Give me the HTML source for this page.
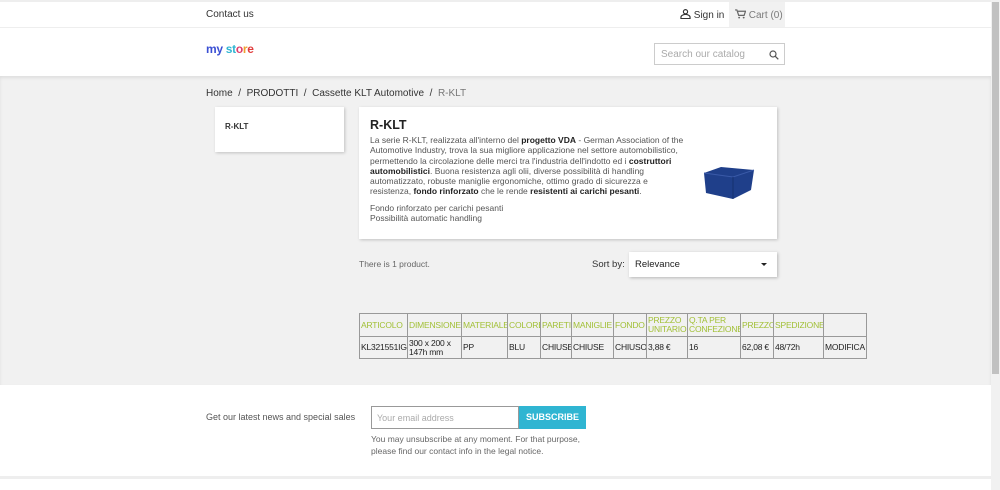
<!DOCTYPE html>
<html><head><meta charset="utf-8"><style>
*{box-sizing:border-box;margin:0;padding:0}
body{width:1000px;height:490px;overflow:hidden;background:#fff;font-family:"Liberation Sans",sans-serif;color:#333;position:relative}
.abs{position:absolute}
.sb{position:absolute;right:0;top:0;width:9px;height:490px;background:#f1f1f1}
.sb div{position:absolute;left:1px;top:2px;width:7px;height:372px;background:#c1c1c1}
table{table-layout:fixed}
td{border:1px solid #999;font-size:8.5px;padding:0 1px;vertical-align:middle;white-space:nowrap;line-height:9px;overflow:hidden;letter-spacing:-0.2px}
tr.h td{color:#a2c037;height:23px}
tr.d td{color:#222;height:22px}
</style></head><body>
<div class="abs" style="left:0;top:0;width:991px;height:2px;background:#eee"></div>
<div class="abs" style="left:206px;top:9px;font-size:10px;color:#333">Contact us</div>
<div class="abs" style="left:680px;top:9px;font-size:10px;color:#333">
<svg width="11" height="10" viewBox="0 0 12 11" style="vertical-align:-1px"><circle cx="6" cy="3" r="2.3" fill="none" stroke="#333" stroke-width="1.3"/><path d="M1 10.5v-1.5c0-2 3-3 5-3s5 1 5 3v1.5z" fill="none" stroke="#333" stroke-width="1.3"/></svg> Sign in</div>
<div class="abs" style="left:729px;top:2px;width:56px;height:25px;background:#f1f1f1;font-size:10px;color:#7a7a7a;padding:7px 0 0 6px">
<svg width="11" height="10" viewBox="0 0 12 11" style="vertical-align:-1px"><path d="M0 1h2l2 6h6l1.5-4.5H3" fill="none" stroke="#666" stroke-width="1.3"/><circle cx="4.5" cy="9.5" r="1" fill="#666"/><circle cx="9.5" cy="9.5" r="1" fill="#666"/></svg> Cart (0)</div>
<div class="abs" style="left:0;top:27px;width:991px;height:1px;background:#eee"></div>
<div class="abs" style="left:206px;top:42px;font-size:12px;font-weight:bold;letter-spacing:-0.3px"><span style="color:#3a4fd3">my </span><span style="color:#2fb5d2">st</span><span style="color:#e03c6a">o</span><span style="color:#f0a030">r</span><span style="color:#e03c3c">e</span></div>
<div class="abs" style="left:654px;top:43px;width:131px;height:22px;border:1px solid #ccc;font-size:10px;color:#aaa;padding:5px 0 0 6px">Search our catalog
<svg class="abs" style="left:114px;top:6px" width="10" height="10" viewBox="0 0 10 10"><circle cx="4" cy="4" r="3" fill="none" stroke="#555" stroke-width="1.2"/><path d="M6.3 6.3L9.3 9.3" stroke="#555" stroke-width="1.3"/></svg></div>
<div class="abs" style="left:0;top:76px;width:991px;height:309px;background:#f1f1f1;box-shadow:inset 0 2px 3px rgba(0,0,0,.08)"></div>
<div class="abs" style="left:206px;top:88px;font-size:10px;color:#333">Home &nbsp;/&nbsp; PRODOTTI &nbsp;/&nbsp; Cassette KLT Automotive &nbsp;/&nbsp; <span style="color:#777">R-KLT</span></div>
<div class="abs" style="left:215px;top:107px;width:129px;height:45px;background:#fff;box-shadow:1px 1px 3px rgba(0,0,0,.2);font-size:8px;font-weight:bold;padding:15px 0 0 10px;color:#333">R-KLT</div>
<div class="abs" style="left:359px;top:107px;width:418px;height:132px;background:#fff;box-shadow:1px 1px 3px rgba(0,0,0,.2)"></div>
<div class="abs" style="left:370px;top:118px;font-size:12.5px;font-weight:bold;color:#222">R-KLT</div>
<div class="abs" style="left:370px;top:135px;width:318px;font-size:8.5px;line-height:10.3px;color:#555">La serie R-KLT, realizzata all'interno del <b style="color:#222">progetto VDA</b> - German Association of the Automotive Industry, trova la sua migliore applicazione nel settore automobilistico, permettendo la circolazione delle merci tra l'industria dell'indotto ed i <b style="color:#222">costruttori automobilistici</b>. Buona resistenza agli olii, diverse possibilità di handling automatizzato, robuste maniglie ergonomiche, ottimo grado di sicurezza e resistenza, <b style="color:#222">fondo rinforzato</b> che le rende <b style="color:#222">resistenti ai carichi pesanti</b>.<div style="height:6px"></div>Fondo rinforzato per carichi pesanti<br>Possibilità automatic handling</div>
<svg class="abs" style="left:703px;top:163px" width="52" height="38" viewBox="0 0 52 38"><path d="M1 10L18 4 51 7 48 27 30 36 3 30z" fill="#1f3f8a"/><path d="M1 10L30 14 51 7" fill="none" stroke="#3a5aa8" stroke-width="1"/><path d="M30 14V36" stroke="#15306e" stroke-width="1"/></svg>
<div class="abs" style="left:359px;top:259px;font-size:8.5px;color:#666">There is 1 product.</div>
<div class="abs" style="left:592px;top:259px;font-size:9.5px;color:#333">Sort by:</div>
<div class="abs" style="left:629px;top:252px;width:148px;height:25px;background:#fff;box-shadow:1px 1px 3px rgba(0,0,0,.25);font-size:9.5px;padding:7px 0 0 6px;color:#222">Relevance<span class="abs" style="left:132px;top:11px;border:3px solid transparent;border-top:3px solid #222"></span></div>
<table class="abs" style="left:359px;top:313px;width:507px;border-collapse:collapse;border:1px solid #555">
<colgroup><col style="width:48px"><col style="width:54px"><col style="width:46px"><col style="width:33px"><col style="width:31px"><col style="width:42px"><col style="width:33px"><col style="width:41px"><col style="width:53px"><col style="width:33px"><col style="width:50px"><col style="width:43px"></colgroup>
<tr class="h"><td>ARTICOLO</td><td>DIMENSIONE</td><td>MATERIALE</td><td>COLORE</td><td>PARETI</td><td>MANIGLIE</td><td>FONDO</td><td>PREZZO<br>UNITARIO</td><td>Q.TA PER<br>CONFEZIONE</td><td>PREZZO</td><td>SPEDIZIONE</td><td></td></tr>
<tr class="d"><td>KL321551IG</td><td>300 x 200 x<br>147h mm</td><td>PP</td><td>BLU</td><td>CHIUSE</td><td>CHIUSE</td><td>CHIUSO</td><td>3,88 €</td><td>16</td><td>62,08 €</td><td>48/72h</td><td>MODIFICA</td></tr>
</table>
<div class="abs" style="left:206px;top:412px;font-size:9px;color:#555">Get our latest news and special sales</div>
<div class="abs" style="left:371px;top:406px;width:148px;height:23px;border:1px solid #999;font-size:9px;color:#aaa;padding:6px 0 0 5px">Your email address</div>
<div class="abs" style="left:519px;top:406px;width:67px;height:23px;background:#2fb5d2;color:#fff;font-size:9px;font-weight:bold;text-align:center;padding-top:6px">SUBSCRIBE</div>
<div class="abs" style="left:371px;top:434px;font-size:8.5px;line-height:11.5px;color:#666">You may unsubscribe at any moment. For that purpose,<br>please find our contact info in the legal notice.</div>
<div class="abs" style="left:0;top:476px;width:991px;height:3px;background:#eee"></div>
<div class="sb"><div></div></div>
</body></html>
